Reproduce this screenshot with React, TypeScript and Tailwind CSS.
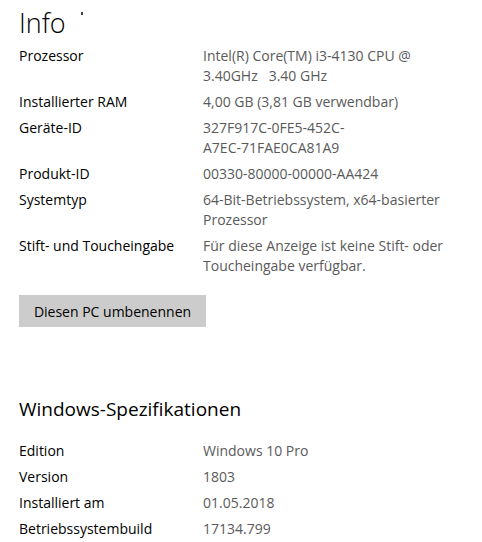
const font = { fontFamily: '"Open Sans", "Noto Sans", sans-serif' };

type Row = { label: string; value: React.ReactNode };

const deviceRows: Row[] = [
  {
    label: "Prozessor",
    value: (
      <>
        Intel(R) Core(TM) i3-4130 CPU @
        <br />
        3.40GHz&nbsp;&nbsp; 3.40 GHz
      </>
    ),
  },
  { label: "Installierter RAM", value: "4,00 GB (3,81 GB verwendbar)" },
  {
    label: "Geräte-ID",
    value: (
      <>
        327F917C-0FE5-452C-
        <br />
        A7EC-71FAE0CA81A9
      </>
    ),
  },
  { label: "Produkt-ID", value: "00330-80000-00000-AA424" },
  {
    label: "Systemtyp",
    value: (
      <>
        64-Bit-Betriebssystem, x64-basierter
        <br />
        Prozessor
      </>
    ),
  },
  {
    label: "Stift- und Toucheingabe",
    value: (
      <>
        Für diese Anzeige ist keine Stift- oder
        <br />
        Toucheingabe verfügbar.
      </>
    ),
  },
];

const winRows: Row[] = [
  { label: "Edition", value: "Windows 10 Pro" },
  { label: "Version", value: "1803" },
  { label: "Installiert am", value: "01.05.2018" },
  { label: "Betriebssystembuild", value: "17134.799" },
];

function SpecList({ rows }: { rows: Row[] }) {
  return (
    <div className="flex flex-col gap-[6px]">
      {rows.map((r) => (
        <div key={r.label} className="flex text-[14px] leading-[20px]">
          <div className="w-[184px] shrink-0 text-black">{r.label}</div>
          <div className="text-[#5a5a5a]">{r.value}</div>
        </div>
      ))}
    </div>
  );
}

export default function App() {
  return (
    <div className="w-[482px] h-[542px] bg-white overflow-hidden pl-[19px]" style={font}>
      <div className="relative pt-[6px]">
        <h1 className="text-[27px] font-light leading-[34px] text-black">Info</h1>
        <span className="absolute left-[62px] top-[12px] w-[2px] h-[3px] bg-[#444]" />
      </div>
      <div className="mt-[6px]">
        <SpecList rows={deviceRows} />
      </div>
      <button className="mt-[19px] w-[187px] h-[32px] bg-[#cccccc] text-[14px] text-black">
        Diesen PC umbenennen
      </button>
      <h2 className="mt-[69px] text-[19px] leading-[26px] text-black">Windows-Spezifikationen</h2>
      <div className="mt-[19px]">
        <SpecList rows={winRows} />
      </div>
    </div>
  );
}
